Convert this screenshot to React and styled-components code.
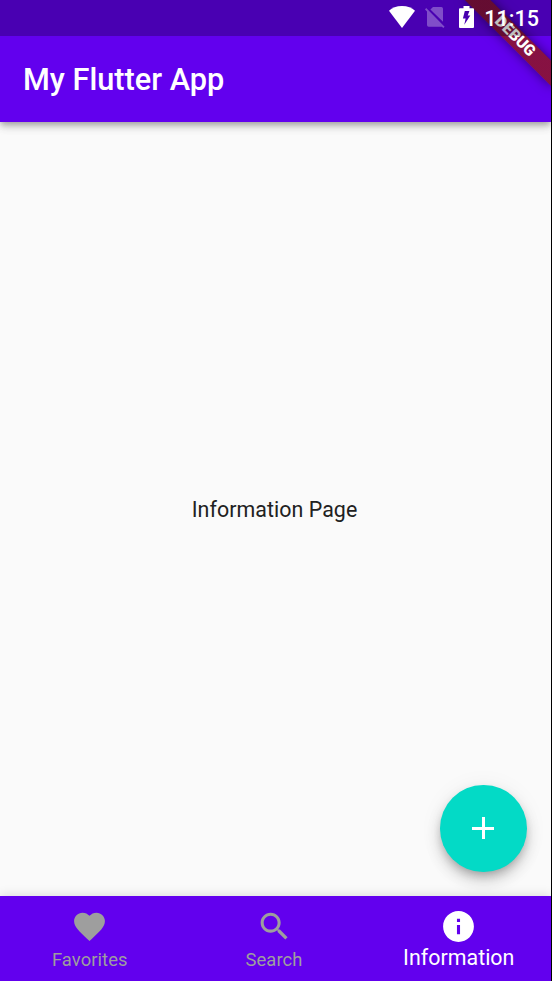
import React from "react";
import styled, { createGlobalStyle } from "styled-components";

const GlobalStyle = createGlobalStyle`
  * { box-sizing: border-box; }
  body { margin: 0; background: #000; font-family: Roboto, sans-serif; }
`;

const Screen = styled.div`
  position: relative;
  display: flex;
  flex-direction: column;
  width: 551px;
  height: 981px;
  overflow: hidden;
  background: #fafafa;
`;

const AppBar = styled.header`
  position: relative;
  z-index: 1;
  flex: none;
  display: flex;
  align-items: center;
  height: 122px;
  padding: 37px 23px 0;
  background: #6200ee;
  box-shadow: 0 3px 6px -1px rgba(0, 0, 0, 0.28), 0 6px 8px rgba(0, 0, 0, 0.1), 0 1px 14px rgba(0, 0, 0, 0.08);
`;

const Title = styled.h1`
  margin: 0;
  color: #fff;
  font-size: 30.7px;
  line-height: 36px;
  font-weight: 500;
  letter-spacing: 0;
`;

const Body = styled.main`
  flex: 1;
  display: flex;
  align-items: center;
  justify-content: center;
  padding: 0 2px 0 0;
  color: #212121;
  font-size: 21.4px;
  letter-spacing: 0.05px;
`;

const BottomBar = styled.nav`
  flex: none;
  display: grid;
  grid-template-columns: 179.5px 189px 1fr;
  height: 85px;
  padding-right: 2px;
  background: #6200ee;
  box-shadow: 0 -1px 10px rgba(0, 0, 0, 0.13);
`;

const NavItem = styled.button`
  display: flex;
  flex-direction: column;
  align-items: center;
  border: 0;
  padding: 12px 0 0;
  background: none;
  color: ${(p) => (p.$active ? "#fff" : "#9e9e9e")};
  font: 400 ${(p) => (p.$active ? 21.4 : 18.4)}px/25px Roboto, sans-serif;
  letter-spacing: ${(p) => (p.$active ? 0.02 : 0.08)}px;
`;

const NavIcon = styled.svg`
  flex: none;
  width: 37px;
  height: 37px;
  fill: currentColor;
`;

const NavLabel = styled.span`
  white-space: nowrap;
  margin-top: ${(p) => (p.$active ? 0 : 2)}px;
`;

const Fab = styled.button`
  position: absolute;
  right: 24.3px;
  bottom: 109.5px;
  display: flex;
  align-items: center;
  justify-content: center;
  width: 86.4px;
  height: 86.4px;
  padding: 0;
  border: 0;
  border-radius: 50%;
  background: #03dac6;
  box-shadow: 0 5px 8px -2px rgba(0, 0, 0, 0.22), 0 9px 15px rgba(0, 0, 0, 0.16), 0 2px 24px rgba(0, 0, 0, 0.06);
`;

const BannerCorner = styled.div`
  position: absolute;
  z-index: 2;
  top: 0;
  right: 0;
  width: 110px;
  height: 110px;
  overflow: hidden;
`;

const Banner = styled.div`
  position: absolute;
  top: 42.5px;
  left: 49px;
  width: 122px;
  height: 18px;
  transform-origin: 61px -42.5px;
  transform: rotate(45deg);
  background: linear-gradient(rgba(183, 28, 28, 0.627), rgba(183, 28, 28, 0.627)), rgba(0, 0, 0, 0.45);
  box-shadow: 0 0 12px rgba(0, 0, 0, 0.5);
  color: #fff;
  font-size: 15.6px;
  line-height: 17px;
  font-weight: 900;
  text-align: center;
`;

const StatusBar = styled.div`
  position: absolute;
  z-index: 3;
  top: 0;
  left: 0;
  right: 0;
  display: flex;
  justify-content: flex-end;
  align-items: center;
  height: 36px;
  padding: 0 12px 2px 0;
  background: rgba(0, 0, 0, 0.25);
  color: #fff;
`;

const StatusIcon = styled.svg`
  flex: none;
  display: block;
  fill: #fff;
  margin-right: ${(p) => p.$gap}px;
  opacity: ${(p) => (p.$dim ? 0.3 : 1)};
`;

const Clock = styled.time`
  width: 55px;
  font-size: 21.6px;
  line-height: 30px;
  font-weight: 500;
  padding-top: 4px;
  text-align: right;
`;

const items = [
  {
    label: "Favorites",
    path: "M12 21.35l-1.45-1.32C5.4 15.36 2 12.28 2 8.5 2 5.42 4.42 3 7.5 3c1.74 0 3.41.81 4.5 2.09C13.09 3.81 14.76 3 16.5 3 19.58 3 22 5.42 22 8.5c0 3.78-3.4 6.86-8.55 11.54L12 21.35z",
  },
  {
    label: "Search",
    path: "M15.5 14h-.79l-.28-.27C15.41 12.59 16 11.11 16 9.5 16 5.91 13.09 3 9.5 3S3 5.91 3 9.5 5.91 16 9.5 16c1.61 0 3.09-.59 4.23-1.57l.27.28v.79l5 4.99L20.49 19l-4.99-5zm-6 0C7.01 14 5 11.99 5 9.5S7.01 5 9.5 5 14 7.01 14 9.5 11.99 14 9.5 14z",
  },
  {
    label: "Information",
    active: true,
    path: "M12 2C6.48 2 2 6.48 2 12s4.48 10 10 10 10-4.48 10-10S17.52 2 12 2zm1 15h-2v-6h2v6zm0-8h-2V7h2v2z",
  },
];

export default function App() {
  return (
    <>
      <GlobalStyle />
      <Screen>
        <AppBar>
          <Title>My Flutter App</Title>
        </AppBar>
        <Body>Information Page</Body>
        <BottomBar>
          {items.map((item) => (
            <NavItem key={item.label} $active={item.active}>
              <NavIcon viewBox="0 0 24 24">
                <path d={item.path} />
              </NavIcon>
              <NavLabel $active={item.active}>{item.label}</NavLabel>
            </NavItem>
          ))}
        </BottomBar>
        <Fab aria-label="Add">
          <svg width="23" height="23" viewBox="0 0 23 23" fill="#fff" shapeRendering="crispEdges">
            <path d="M10 0h3v10h9v3h-9v9h-3v-9H0v-3h10z" />
          </svg>
        </Fab>
        <BannerCorner>
          <Banner>DEBUG</Banner>
        </BannerCorner>
        <StatusBar>
          <StatusIcon $gap={10} width="26" height="22" viewBox="0 0 26 22">
            <path d="M13 22L0 4.7C3 2.1 7.5 0 13 0s10 2.1 13 4.7z" />
          </StatusIcon>
          <StatusIcon $gap={14} $dim width="20" height="22" viewBox="0 0 20 22">
            <path d="M8 1h8.3Q18 1 18 2.8v13L5.4 3.4zM1.2 2.1L19.6 20.8 18.3 22 16.9 20.7H3.7Q2 20.7 2 19V5.6L0 3.4z" />
          </StatusIcon>
          <StatusIcon $gap={10} width="15" height="22" viewBox="0 0 15 22">
            <path
              fillRule="evenodd"
              d="M4.5 0h6v2.2H14q1 0 1 1V21q0 1-1 1H1q-1 0-1-1V3.2q0-1 1-1h3.5zM5.8 5L3.9 12.5h2.7L5.3 18.8 11.3 9.6H8.7L10.4 5z"
            />
          </StatusIcon>
          <Clock>11:15</Clock>
        </StatusBar>
      </Screen>
    </>
  );
}
